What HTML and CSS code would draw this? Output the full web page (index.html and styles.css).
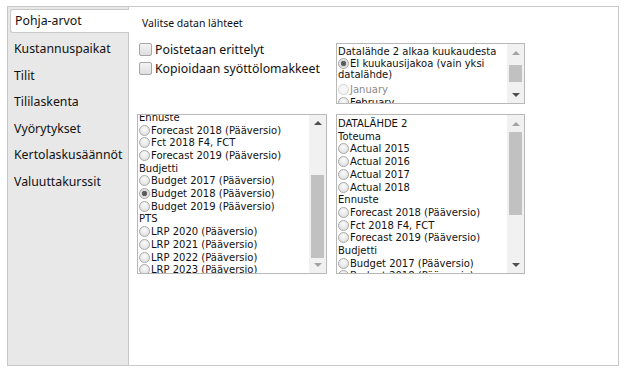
FILE: index.html
```html
<!DOCTYPE html>
<html lang="fi">
<head>
  <meta charset="UTF-8">
  <title>Pohja-arvot</title>
  <link rel="stylesheet" href="styles.css">
</head>
<body>
  <div class="panel">
    <div class="sidebar">
      <div class="tab active">Pohja-arvot</div>
      <div class="tab">Kustannuspaikat</div>
      <div class="tab">Tilit</div>
      <div class="tab">Tililaskenta</div>
      <div class="tab">Vyörytykset</div>
      <div class="tab">Kertolaskusäännöt</div>
      <div class="tab">Valuuttakurssit</div>
    </div>

    <div class="content">
      <div class="heading">Valitse datan lähteet</div>
      <div class="grid">
        <div class="checks">
          <label class="check"><span class="box"></span>Poistetaan erittelyt</label>
          <label class="check"><span class="box"></span>Kopioidaan syöttölomakkeet</label>
        </div>

        <div class="listbox small">
          <div class="list-body">
            <div class="group">Datalähde 2 alkaa kuukaudesta</div>
            <div class="opt wrap"><span class="radio on"></span>EI kuukausijakoa (vain yksi datalähde)</div>
            <div class="opt disabled gap"><span class="radio"></span>January</div>
            <div class="opt"><span class="radio"></span>February</div>
            <div class="opt"><span class="radio"></span>March</div>
          </div>
          <div class="scrollbar">
            <div class="arrow up off"></div>
            <div class="track"><div class="thumb" style="margin-top: 4px; height: 17px;"></div></div>
            <div class="arrow down"></div>
          </div>
        </div>

        <div class="listbox">
          <div class="list-body bottom">
            <div class="group">DATALÄHDE 1</div>
            <div class="group">Toteuma</div>
            <div class="opt"><span class="radio"></span>Actual 2015</div>
            <div class="opt"><span class="radio"></span>Actual 2016</div>
            <div class="opt"><span class="radio"></span>Actual 2017</div>
            <div class="opt"><span class="radio"></span>Actual 2018</div>
            <div class="group">Ennuste</div>
            <div class="opt"><span class="radio"></span>Forecast 2018 (Pääversio)</div>
            <div class="opt"><span class="radio"></span>Fct 2018 F4, FCT</div>
            <div class="opt"><span class="radio"></span>Forecast 2019 (Pääversio)</div>
            <div class="group">Budjetti</div>
            <div class="opt"><span class="radio"></span>Budget 2017 (Pääversio)</div>
            <div class="opt"><span class="radio on"></span>Budget 2018 (Pääversio)</div>
            <div class="opt"><span class="radio"></span>Budget 2019 (Pääversio)</div>
            <div class="group">PTS</div>
            <div class="opt"><span class="radio"></span>LRP 2020 (Pääversio)</div>
            <div class="opt"><span class="radio"></span>LRP 2021 (Pääversio)</div>
            <div class="opt"><span class="radio"></span>LRP 2022 (Pääversio)</div>
            <div class="opt"><span class="radio"></span>LRP 2023 (Pääversio)</div>
          </div>
          <div class="scrollbar">
            <div class="arrow up"></div>
            <div class="track"><div class="thumb" style="margin-top: 44px; height: 83px;"></div></div>
            <div class="arrow down off"></div>
          </div>
        </div>

        <div class="listbox">
          <div class="list-body top">
            <div class="group">DATALÄHDE 2</div>
            <div class="group">Toteuma</div>
            <div class="opt"><span class="radio"></span>Actual 2015</div>
            <div class="opt"><span class="radio"></span>Actual 2016</div>
            <div class="opt"><span class="radio"></span>Actual 2017</div>
            <div class="opt"><span class="radio"></span>Actual 2018</div>
            <div class="group">Ennuste</div>
            <div class="opt"><span class="radio"></span>Forecast 2018 (Pääversio)</div>
            <div class="opt"><span class="radio"></span>Fct 2018 F4, FCT</div>
            <div class="opt"><span class="radio"></span>Forecast 2019 (Pääversio)</div>
            <div class="group">Budjetti</div>
            <div class="opt"><span class="radio"></span>Budget 2017 (Pääversio)</div>
            <div class="opt"><span class="radio"></span>Budget 2018 (Pääversio)</div>
            <div class="opt"><span class="radio"></span>Budget 2019 (Pääversio)</div>
          </div>
          <div class="scrollbar">
            <div class="arrow up off"></div>
            <div class="track"><div class="thumb" style="margin-top: 0; height: 83px;"></div></div>
            <div class="arrow down"></div>
          </div>
        </div>
      </div>
    </div>
  </div>
</body>
</html>
```

FILE: styles.css
```css
* {
  box-sizing: border-box;
}
body {
  margin: 0;
  background: #fff;
  font-family: "Noto Sans", "Open Sans", sans-serif;
  color: #111;
}

.panel {
  display: flex;
  margin: 6px 7px 0 7px;
  width: 612px;
  height: 360px;
  border: 1px solid #c9c9c9;
}

.sidebar {
  width: 121px;
  background: #e8e8e8;
  border-right: 1px solid #c9c9c9;
  padding-top: 2px;
}
.tab {
  height: 26.6px;
  line-height: 26.6px;
  padding-left: 6px;
  font-size: 12.3px;
  color: #111;
}
.tab.active {
  height: 24px;
  line-height: 22px;
  margin: 0 -1px 3px 2px;
  padding-left: 4px;
  background: #fff;
  border: 1px solid #c9c9c9;
  border-right: none;
  border-radius: 3px 0 0 3px;
}

.content {
  flex: 1;
  padding: 9px 0 0 8px;
}
.heading {
  font-size: 10.5px;
  line-height: 15px;
  margin: 0 0 12px 5px;
}
.grid {
  display: grid;
  grid-template-columns: 190px 189px;
  grid-template-rows: 61px 160px;
  column-gap: 9px;
  row-gap: 10px;
}

.checks {
  display: flex;
  flex-direction: column;
  padding-left: 2px;
}
.check {
  display: flex;
  align-items: center;
  height: 19px;
  line-height: 17px;
  font-size: 12.3px;
  margin-top: -3px;
}
.check + .check {
  margin-top: 0;
}
.box {
  width: 13px;
  height: 13px;
  margin-right: 3px;
  border: 1px solid #a6a6a6;
  border-radius: 2px;
  background: linear-gradient(#f4f4f4, #dedede);
}

.listbox {
  display: flex;
  border: 1px solid #b8b8b8;
  background: #fff;
}
.list-body {
  flex: 1;
  overflow: hidden;
  display: flex;
  flex-direction: column;
  font-family: "DejaVu Sans", Verdana, sans-serif;
  font-size: 10px;
  padding-left: 1px;
}
.list-body.bottom {
  justify-content: flex-end;
}
.list-body.bottom .opt:last-child {
  margin-bottom: -4px;
}
.list-body.top {
  padding-top: 3px;
}
.group,
.opt {
  flex: none;
  line-height: 12.7px;
  white-space: nowrap;
  color: #111;
}
.opt.wrap {
  white-space: normal;
  line-height: 11.7px;
}
.small .list-body {
  padding-top: 2px;
}
.small .group {
  line-height: 11.7px;
}
.opt.disabled {
  color: #8a8a8a;
}
.opt.gap {
  margin-top: 3px;
}
.radio {
  display: inline-block;
  width: 11px;
  height: 11px;
  margin-right: 1px;
  vertical-align: -2px;
  border-radius: 50%;
  border: 1px solid #a9a9a9;
  background: radial-gradient(circle at 50% 35%, #fbfbfb, #d9d9d9);
}
.radio.on {
  background: radial-gradient(circle, #555 0, #666 2.5px, #dcdcdc 3px, #f2f2f2);
}
.disabled .radio {
  border-color: #d4d4d4;
  background: #f6f6f6;
}

.scrollbar {
  width: 17px;
  display: flex;
  flex-direction: column;
  background: #f1f1f1;
}
.arrow {
  height: 17px;
  display: flex;
  align-items: center;
  justify-content: center;
}
.arrow::after {
  content: "";
  border-left: 4px solid transparent;
  border-right: 4px solid transparent;
}
.arrow.up::after {
  border-bottom: 4px solid #505050;
}
.arrow.down::after {
  border-top: 4px solid #505050;
}
.arrow.up.off::after {
  border-bottom-color: #a3a3a3;
}
.arrow.down.off::after {
  border-top-color: #a3a3a3;
}
.track {
  flex: 1;
  padding: 0 2px;
}
.thumb {
  background: #c1c1c1;
}
```
